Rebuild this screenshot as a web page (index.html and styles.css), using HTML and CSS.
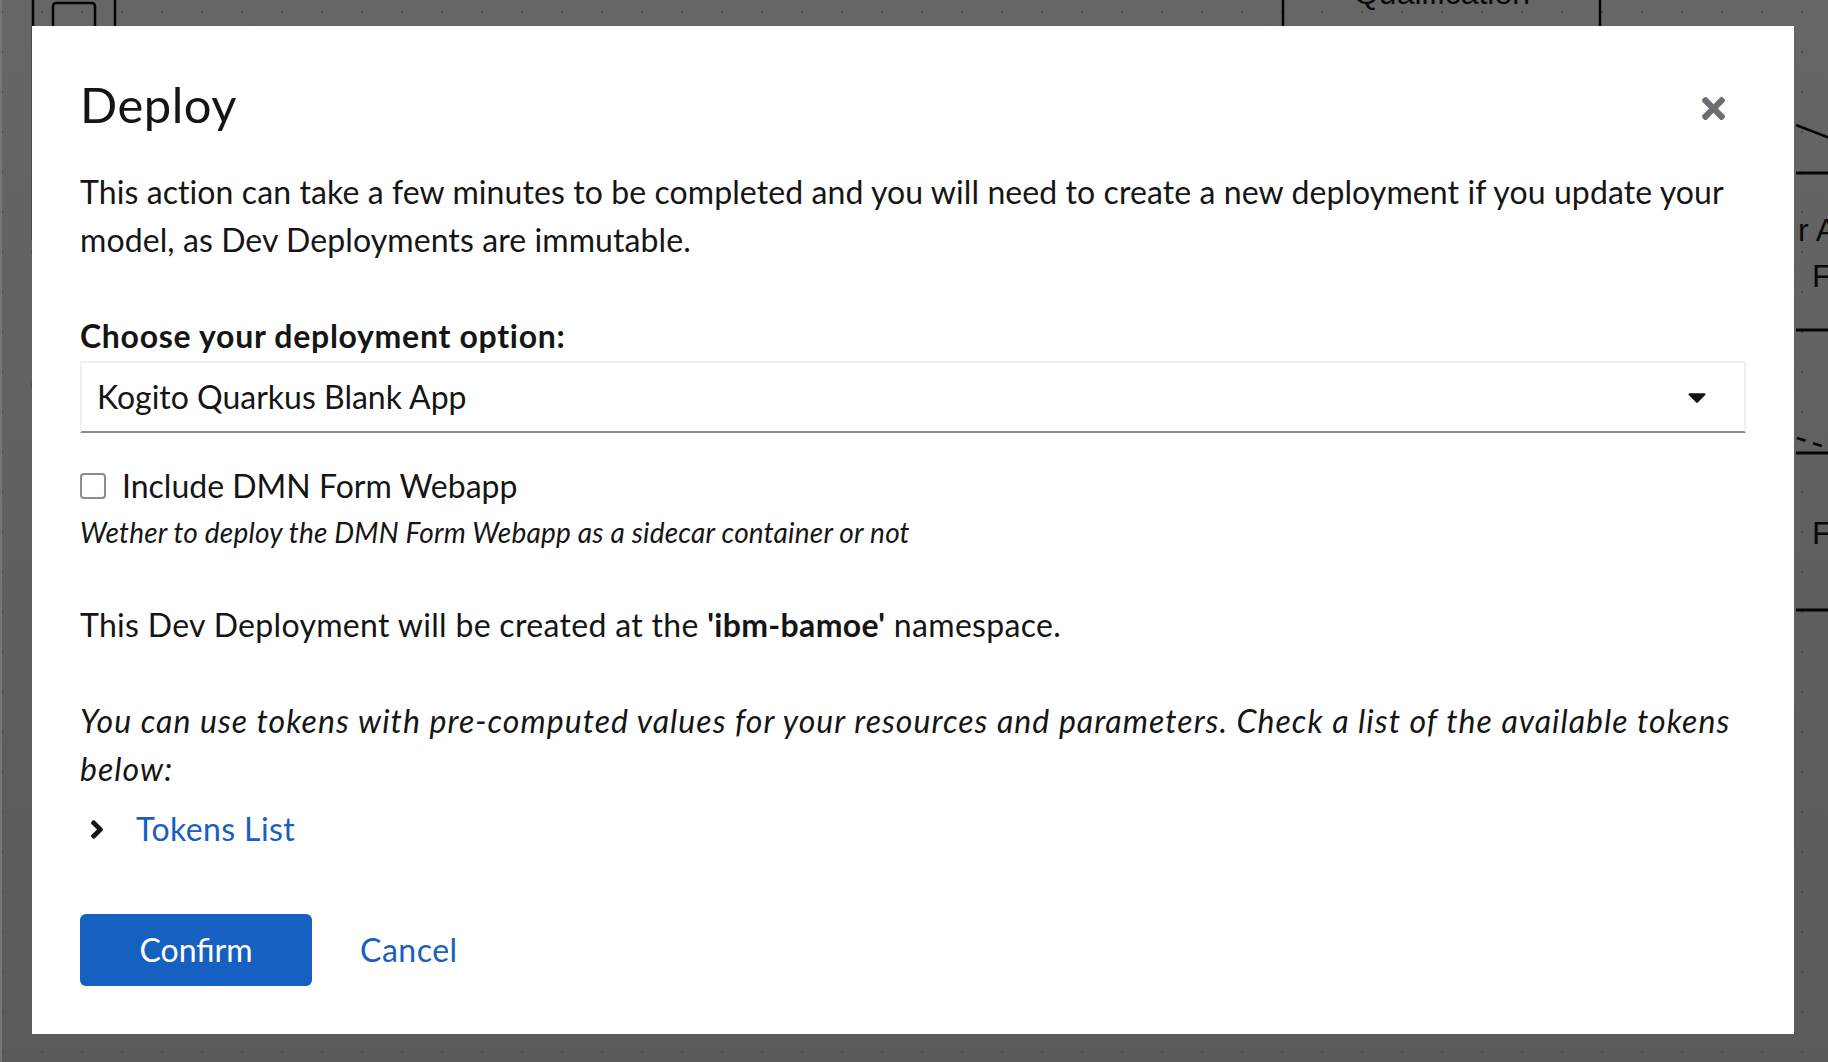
FILE: index.html
```html
<!DOCTYPE html>
<html lang="en">
<head>
<meta charset="utf-8">
<title>Deploy</title>
<link rel="stylesheet" href="styles.css">
</head>
<body>
<div class="canvas">
  <svg class="diagram" width="1828" height="1062" viewBox="0 0 1828 1062">
    <line x1="31" y1="0" x2="31" y2="240" class="stroke"/>
    <path d="M31 250 Q34 318 31 387" class="stroke"/>
    <path d="M31 493 Q34 505 31 517" class="stroke"/>
    <path d="M31 627 Q34 638 31 650" class="stroke"/>
    <line x1="113" y1="0" x2="113" y2="26" class="stroke"/>
    <rect x="51" y="3" width="42" height="40" rx="3" class="stroke"/>
    <line x1="1281" y1="0" x2="1281" y2="26" class="stroke"/>
    <line x1="1598" y1="0" x2="1598" y2="26" class="stroke"/>
    <text x="1440" y="4" class="node-text" text-anchor="middle">Qualification</text>
    <line x1="1794" y1="125" x2="1828" y2="138" class="stroke"/>
    <line x1="1794" y1="173" x2="1826" y2="173" class="stroke thick"/>
    <text x="1796" y="241" class="node-text">r A</text>
    <text x="1810" y="287" class="node-text">F</text>
    <line x1="1794" y1="330" x2="1826" y2="330" class="stroke thick"/>
    <line x1="1795" y1="438" x2="1826" y2="448" class="stroke dash"/>
    <line x1="1794" y1="453" x2="1826" y2="453" class="stroke thick"/>
    <text x="1810" y="544" class="node-text">F</text>
    <line x1="1794" y1="610" x2="1826" y2="610" class="stroke thick"/>
    <rect x="1826" y="0" width="2" height="1062" fill="#5a4a36"/>
  </svg>
</div>

<div class="backdrop">
  <div class="modal" role="dialog" aria-label="Deploy">
    <header class="modal-header">
      <h1 class="modal-title">Deploy</h1>
      <button class="close-btn" aria-label="Close">
        <svg width="23" height="23" viewBox="0 80 352 352"><path fill="#6a6e73" d="M242.72 256l100.07-100.07c12.28-12.28 12.28-32.19 0-44.48l-22.24-22.240c-12.28-12.28-32.19-12.28-44.48 0L176 189.28 75.93 89.21c-12.28-12.28-32.19-12.28-44.48 0L9.21 111.45c-12.28 12.28-12.28 32.19 0 44.48L109.28 256 9.21 356.07c-12.28 12.28-12.28 32.19 0 44.48l22.24 22.24c12.28 12.28 32.2 12.28 44.48 0L176 322.72l100.07 100.07c12.28 12.28 32.2 12.28 44.48 0l22.24-22.24c12.28-12.28 12.28-32.19 0-44.48L242.72 256z"/></svg>
      </button>
    </header>

    <div class="modal-body">
      <p class="intro">This action can take a few minutes to be completed and you will need to create a new deployment if you update your model, as Dev Deployments are immutable.</p>

      <div class="form-group">
        <label class="form-label">Choose your deployment option:</label>
        <div class="select">
          <span class="select-value">Kogito Quarkus Blank App</span>
          <svg class="caret" width="18" height="10" viewBox="4 190 312 172"><path fill="#151515" d="M31.3 192h257.3c17.8 0 26.7 21.5 14.1 34.1L174.1 354.8c-7.8 7.8-20.5 7.8-28.3 0L17.2 226.1C4.6 213.5 13.5 192 31.3 192z"/></svg>
        </div>
      </div>

      <div class="check-row">
        <span class="checkbox"></span>
        <span class="check-label">Include DMN Form Webapp</span>
      </div>
      <div class="helper">Wether to deploy the DMN Form Webapp as a sidecar container or not</div>

      <p class="namespace">This Dev Deployment will be created at the <strong>'ibm-bamoe'</strong> namespace.</p>

      <p class="tokens-note">You can use tokens with pre-computed values for your resources and parameters. Check a list of the available tokens below:</p>

      <div class="expand-toggle">
        <svg class="chevron" width="12" height="19" viewBox="25 96 206 320"><path fill="#151515" d="M224.3 273l-136 136c-9.4 9.4-24.6 9.4-33.9 0l-22.6-22.6c-9.4-9.4-9.4-24.6 0-33.9l96.4-96.4-96.4-96.4c-9.4-9.4-9.4-24.6 0-33.9L54.3 103c9.4-9.4 24.6-9.4 33.9 0l136 136c9.5 9.4 9.5 24.6.1 34z"/></svg>
        <span class="link">Tokens List</span>
      </div>
    </div>

    <footer class="modal-footer">
      <button class="btn btn-primary">Confirm</button>
      <button class="btn btn-link">Cancel</button>
    </footer>
  </div>
</div>
</body>
</html>
```

FILE: styles.css
```css
html, body {
  margin: 0;
  padding: 0;
  width: 100%;
  height: 100%;
  overflow: hidden;
}

body {
  font-family: Lato, "Open Sans", sans-serif;
  color: #151515;
}

.canvas {
  position: fixed;
  inset: 0;
  background-color: #626262;
  background-image:
    radial-gradient(circle, #4c4c4c 1.1px, transparent 1.6px),
    linear-gradient(#666666, #5a5a5a);
  background-size: 40px 40px, 100% 100%;
  background-position: -20px -8px, 0 0;
  border-left: 2px solid #767676;
}

.diagram {
  display: block;
}

.stroke {
  stroke: #050505;
  stroke-width: 2.5;
  fill: none;
}

.thick {
  stroke-width: 3;
}

.dash {
  stroke-dasharray: 9 8;
}

.node-text {
  font-family: "Liberation Sans", Arial, sans-serif;
  font-size: 32px;
  fill: #0a0a0a;
}

.backdrop {
  position: fixed;
  inset: 0;
  display: flex;
  align-items: flex-start;
  padding: 26px 0 0 32px;
}

.modal {
  width: 1762px;
  box-sizing: border-box;
  background: #ffffff;
  padding: 48px 48px 48px 48px;
}

.modal-header {
  display: flex;
  align-items: center;
  justify-content: space-between;
}

.modal-title {
  margin: 2px 0 0 0;
  font-size: 49px;
  line-height: 56px;
  font-weight: 400;
  letter-spacing: 0.5px;
  color: #151515;
}

.close-btn {
  border: 0;
  background: transparent;
  padding: 0;
  margin: 10px 21px 0 0;
  display: flex;
}

.modal-body {
  font-size: 32px;
  line-height: 48px;
}

.intro {
  margin: 36px 0 0 0;
  letter-spacing: 0.09px;
}

.form-group {
  margin-top: 48px;
  display: flex;
  flex-direction: column;
}

.form-label {
  font-weight: 700;
  line-height: 48px;
  letter-spacing: 0.7px;
}

.select {
  margin-top: 1px;
  height: 72px;
  box-sizing: border-box;
  border: 2px solid #f0f0f0;
  border-bottom-color: #8a8d90;
  display: flex;
  align-items: center;
  justify-content: space-between;
  padding: 0 38px 0 15px;
}

.select-value {
  line-height: 48px;
}

.caret {
  display: block;
  margin-top: 2px;
}

.check-row {
  margin-top: 29px;
  display: flex;
  align-items: center;
  gap: 16px;
}

.checkbox {
  width: 26px;
  height: 26px;
  box-sizing: border-box;
  border: 2px solid #8a8d90;
  border-radius: 4px;
  background: #fff;
}

.helper {
  margin-top: 1px;
  font-size: 28px;
  line-height: 42px;
  font-style: italic;
  letter-spacing: 0.2px;
}

.namespace {
  margin: 48px 0 0 0;
  letter-spacing: 0.32px;
}

.namespace strong {
  font-weight: 700;
}

.tokens-note {
  margin: 48px 0 0 0;
  font-style: italic;
  letter-spacing: 1.05px;
}

.expand-toggle {
  margin-top: 12px;
  display: flex;
  align-items: center;
  padding-left: 11px;
  gap: 33px;
}

.chevron {
  display: block;
}

.link {
  color: #1760c2;
  letter-spacing: 0.4px;
}

.modal-footer {
  margin-top: 61px;
  display: flex;
  gap: 16px;
}

.btn {
  font-family: inherit;
  font-size: 32px;
  line-height: 48px;
  height: 72px;
  border: 0;
  cursor: pointer;
}

.btn-primary {
  width: 232px;
  background: #1660c1;
  color: #ffffff;
  border-radius: 6px;
}

.btn-link {
  background: transparent;
  color: #1760c2;
  padding: 0 32px;
  letter-spacing: 0.5px;
}
```
